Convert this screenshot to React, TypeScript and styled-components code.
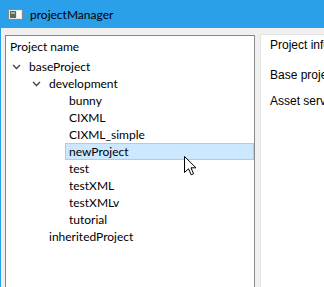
import styled, { createGlobalStyle } from 'styled-components';

const GlobalStyle = createGlobalStyle`
  html, body {
    margin: 0;
    padding: 0;
    overflow: hidden;
    background: #f0f0f0;
  }
`;

interface TreeNode {
  label: string;
  level: number;
  expanded?: boolean;
  selected?: boolean;
}

const nodes: TreeNode[] = [
  { label: 'baseProject', level: 0, expanded: true },
  { label: 'development', level: 1, expanded: true },
  { label: 'bunny', level: 2 },
  { label: 'CIXML', level: 2 },
  { label: 'CIXML_simple', level: 2 },
  { label: 'newProject', level: 2, selected: true },
  { label: 'test', level: 2 },
  { label: 'testXML', level: 2 },
  { label: 'testXMLv', level: 2 },
  { label: 'tutorial', level: 2 },
  { label: 'inheritedProject', level: 1 },
];

const Window = styled.div`
  position: relative;
  width: 324px;
  height: 287px;
  box-sizing: border-box;
  border-left: 1px solid #2a9fea;
  background: #f0f0f0;
  overflow: hidden;
  font-family: 'Segoe UI', Lato, 'Noto Sans', sans-serif;
  font-size: 12px;
  color: #000;
`;

const TitleBar = styled.div`
  height: 28px;
  background: #2a9fea;
  display: flex;
  align-items: center;
  gap: 7px;
  padding-left: 8px;
  margin-left: -1px;
`;

const Title = styled.span`
  font-size: 12px;
  color: #000;
`;

const Body = styled.div`
  display: flex;
  align-items: flex-start;
  gap: 5px;
  padding: 6px 0 0 4px;
`;

const TreePanel = styled.div`
  width: 248px;
  height: 260px;
  margin-top: 1px;
  background: #fff;
  border: 1px solid #828790;
  border-right-color: #8b8b8b;
  flex-shrink: 0;
`;

const Header = styled.div`
  height: 22px;
  line-height: 22px;
  padding-left: 4px;
`;

const Row = styled.div<{ $level: number }>`
  display: flex;
  align-items: stretch;
  height: 17px;
  padding-left: ${({ $level }) => $level * 20}px;
`;

const Toggle = styled.div`
  width: 20px;
  display: flex;
  align-items: center;
  justify-content: center;
  flex-shrink: 0;
`;

const Label = styled.div<{ $selected?: boolean }>`
  flex: 1;
  box-sizing: border-box;
  padding-left: 3px;
  line-height: 15px;
  border: 1px solid ${({ $selected }) => ($selected ? '#99d1ff' : 'transparent')};
  margin-left: -1px;
  background: ${({ $selected }) => ($selected ? '#cce8ff' : 'transparent')};
`;

const InfoPanel = styled.div`
  flex: 1;
  min-width: 0;
  height: 260px;
  background: #fff;
  border-top: 1px solid #e3e3e3;
  border-left: 1px solid #e3e3e3;
  padding: 3px 0 0 9px;
  font-family: 'Liberation Sans', Arial, sans-serif;
  font-size: 12px;
  white-space: nowrap;
  overflow: hidden;
`;

const InfoLine = styled.div<{ $gap: number }>`
  margin-top: ${({ $gap }) => $gap}px;
  line-height: 14px;
`;

const Cursor = styled.svg`
  position: absolute;
  left: 183px;
  top: 156px;
`;

function Chevron() {
  return (
    <svg width="9" height="6" viewBox="0 0 9 6">
      <path d="M1 1 L4.5 4.5 L8 1" fill="none" stroke="#404040" strokeWidth="1.3" />
    </svg>
  );
}

function AppIcon() {
  return (
    <svg width="15" height="11" viewBox="0 0 15 11">
      <rect x="0.5" y="0.5" width="14" height="10" fill="#e8e8e8" stroke="#8a8a8a" />
      <rect x="2" y="2" width="6" height="7" fill="#5b6b64" />
      <rect x="9" y="2" width="4" height="7" fill="#ffffff" />
      <rect x="3" y="3" width="4" height="2" fill="#8fbf9a" />
    </svg>
  );
}

export default function App() {
  return (
    <Window>
      <GlobalStyle />
      <TitleBar>
        <AppIcon />
        <Title>projectManager</Title>
      </TitleBar>
      <Body>
        <TreePanel>
          <Header>Project name</Header>
          {nodes.map((node) => (
            <Row key={node.label} $level={node.level}>
              <Toggle>{node.expanded && <Chevron />}</Toggle>
              <Label $selected={node.selected}>{node.label}</Label>
            </Row>
          ))}
        </TreePanel>
        <InfoPanel>
          <InfoLine $gap={0}>Project info</InfoLine>
          <InfoLine $gap={16}>Base project</InfoLine>
          <InfoLine $gap={12}>Asset server</InfoLine>
        </InfoPanel>
      </Body>
      <Cursor width="13" height="20" viewBox="0 0 13 20">
        <path
          d="M0.5 0.5 L0.5 16.5 L4.5 12.8 L7.2 18.8 L9.6 17.8 L7 11.8 L12 11.8 Z"
          fill="#fff"
          stroke="#000"
          strokeWidth="1"
          strokeLinejoin="round"
        />
      </Cursor>
    </Window>
  );
}
